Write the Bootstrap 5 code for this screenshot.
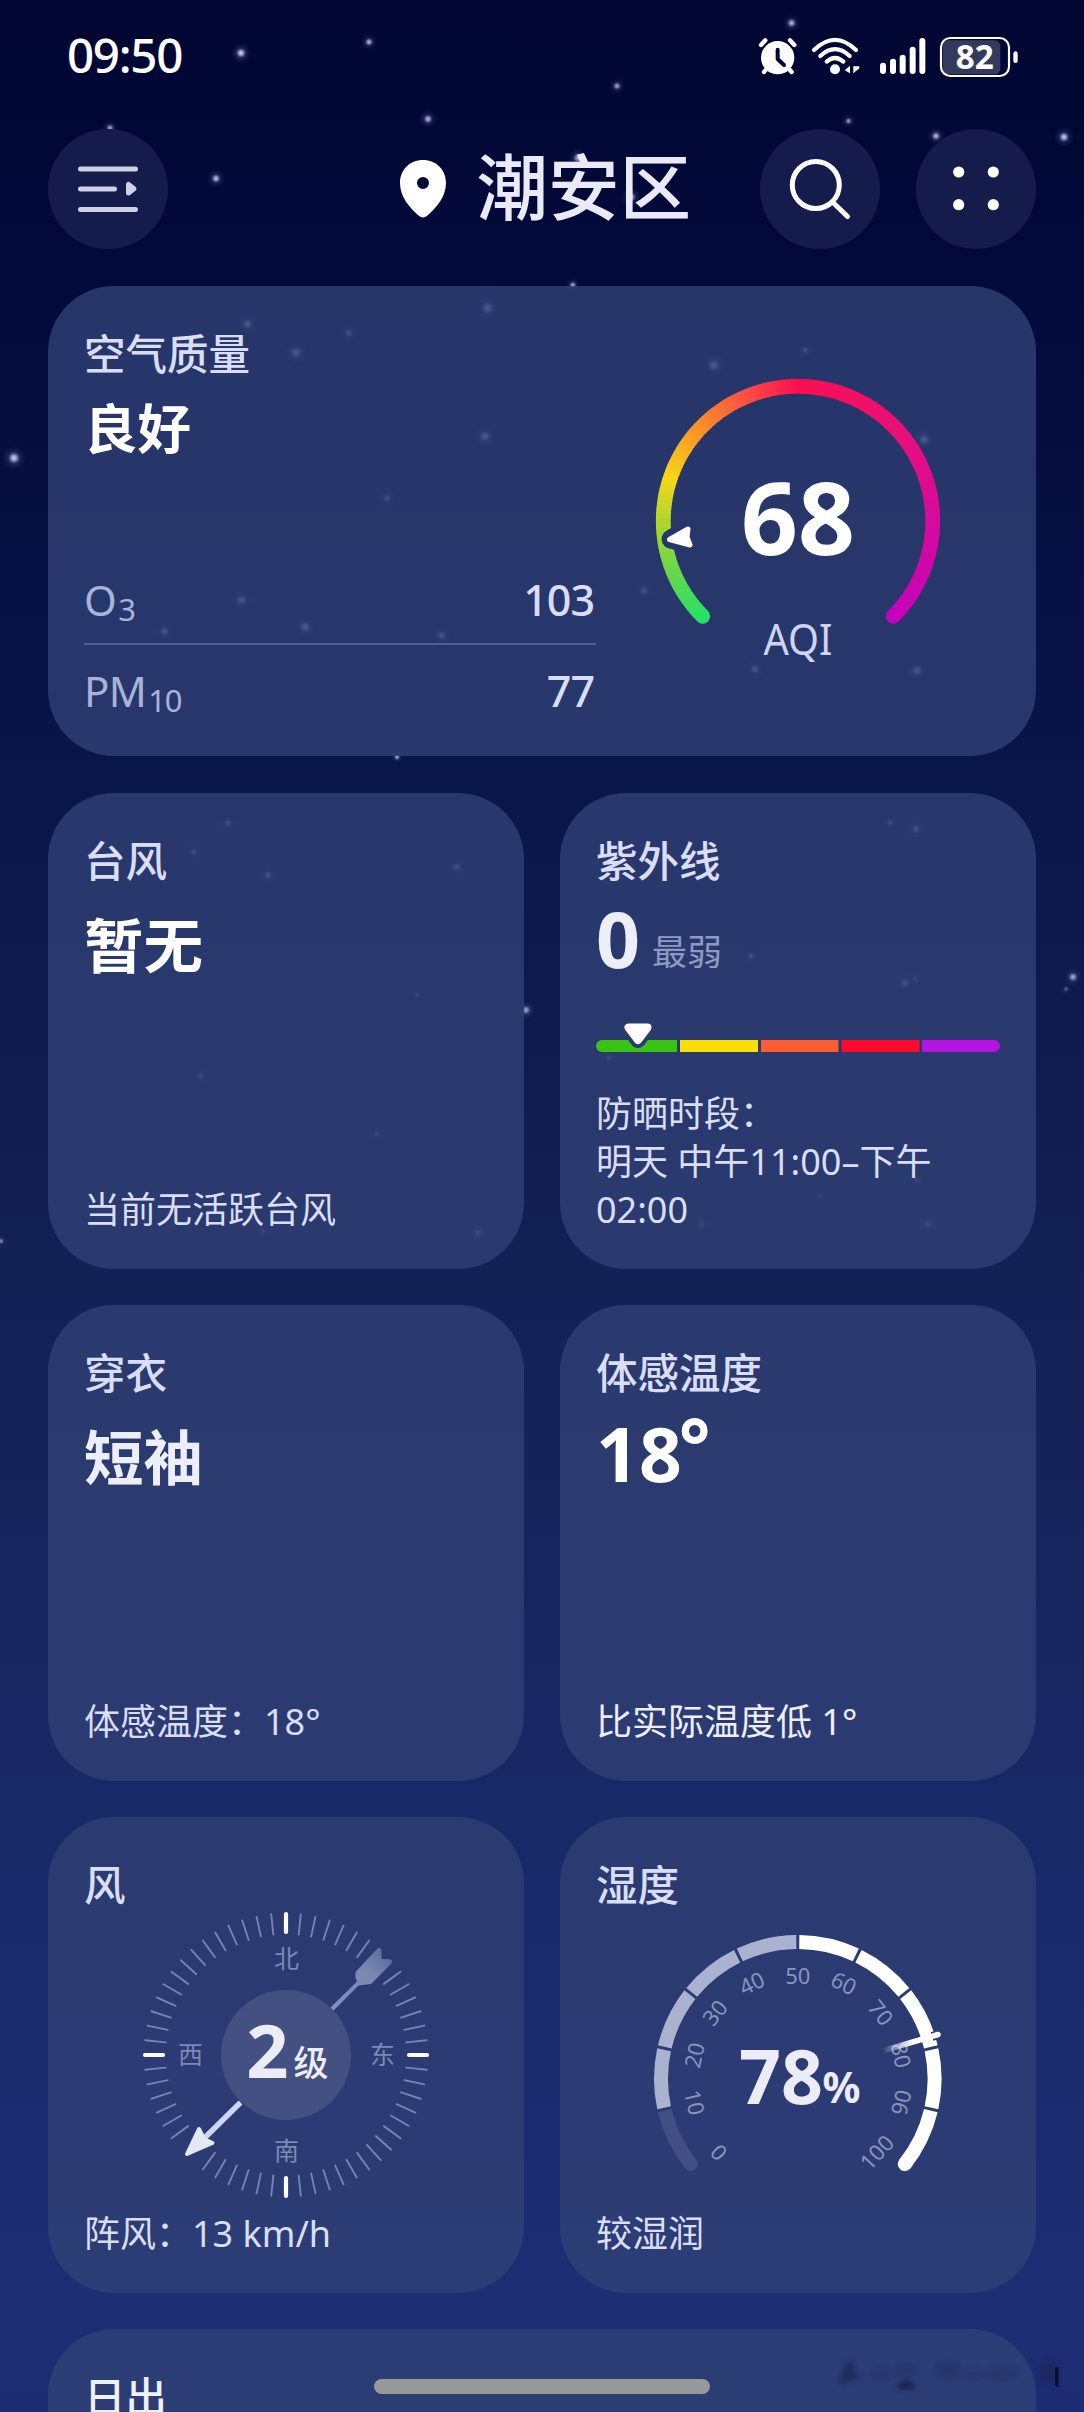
<!DOCTYPE html>
<html lang="zh-CN">
<head>
<meta charset="utf-8">
<meta name="viewport" content="width=device-width, initial-scale=1">
<title>潮安区 天气</title>
<link href="https://cdn.jsdelivr.net/npm/bootstrap@5.3.0/dist/css/bootstrap.min.css" rel="stylesheet">
<style>
body{margin:0;background:#010630;font-family:"Noto Sans","Noto Sans CJK SC",sans-serif;color:#d9def6}
.screen{width:1084px;height:2412px;background:linear-gradient(180deg,#010632 0,#020a3a 280px,#0a1548 780px,#142155 1290px,#192866 1800px,#1f2d75 2300px,#1e2c74 100%)}
.sky{left:0;top:0;z-index:0}
.statusbar{height:113px;padding:0 63.5px 0 67px}
.clock{font-size:47.5px;font-weight:500;line-height:110px;height:113px;letter-spacing:-1.3px;color:#fff}
.topbar{height:173px;padding:16px 48px 37px}
.round-btn{width:120px;height:120px;background:#151c4c;border:0;padding:0}
.place{font-size:71.5px;line-height:110px;color:#e9eaf6;margin-right:69px;font-weight:500;padding-bottom:5px}
.pin{margin-right:25px}
.tiles{padding:0 48px}
.tile{--bs-card-bg:rgba(48,64,116,.82);--bs-card-color:#d9def6;--bs-card-border-width:0;--bs-card-border-radius:66px;height:476px;padding:44px 36px 35px}
.tile-wide{height:470px;padding-bottom:19px}
.pair{gap:36px}
.pair>.tile{width:476px}
.cap{font-size:41.5px;line-height:48px;font-weight:500}
.big{font-size:59.5px;line-height:72px;height:72px;flex-shrink:0;margin-top:24px;font-weight:700;color:#fff}
.big-air{font-size:53.5px;margin-top:15px}
.big-uv{font-size:77px;margin-top:18px;color:#eceef8}
.big-uv span{font-size:35px;line-height:0;font-weight:400;color:#8f9ac4;margin-left:12px;vertical-align:3px}
.big-feel{font-size:75px;margin-top:20px}
.big-feel span{line-height:0;vertical-align:9px;margin-left:-3px}
.soft{color:#eceef9}
.foot{font-size:36px;line-height:48px}
.left-col{width:512px}
.gas{height:92px;font-size:42px;line-height:92px;color:#a9b3da;letter-spacing:-.6px}
.gas span{font-size:43px;font-weight:500;color:#d9def6;letter-spacing:-1px;padding-right:2px}
.gas sub{font-size:31px;bottom:-.16em;line-height:0;margin-left:2px;letter-spacing:-1.4px}
.gas-line{height:90px;line-height:90px;border-bottom:2px solid #515e8f}
.uvbar{margin-top:40px;flex-shrink:0}
.home-bar{left:374px;top:2379px;width:336px;height:15px;border-radius:8px;background:#999}
.shade{left:820px;top:2345px}
svg{display:block}
svg text{font-family:"Noto Sans","Noto Sans CJK SC",sans-serif}
</style>
<script src="https://cdn.jsdelivr.net/npm/bootstrap@5.3.0/dist/js/bootstrap.bundle.min.js"></script>
</head>
<body>
<div class="screen position-relative overflow-hidden">
  <svg class="sky position-absolute" width="1084" height="2412" viewBox="0 0 1084 2412" id="sky">
    <defs><radialGradient id="glow"><stop offset="0" stop-color="#dfe3fb"/><stop offset=".25" stop-color="#b4bce4" stop-opacity=".75"/><stop offset=".5" stop-color="#6f7ab8" stop-opacity=".22"/><stop offset="1" stop-color="#4a58a0" stop-opacity="0"/></radialGradient></defs>
  </svg>

  <div class="position-relative">
    <div class="statusbar d-flex align-items-center justify-content-between">
      <div class="clock">09:50</div>
      <svg width="264" height="65" viewBox="48 -3 792 195" fill="#fff" stroke-linecap="round" stroke-linejoin="round">
        <circle cx="110" cy="98" r="50"/>
        <path d="M60 60 73 46M160 60 147 46" stroke="#fff" stroke-width="13"/>
        <path d="M78 130 69 141M142 130 152 141" stroke="#fff" stroke-width="13"/>
        <path d="M110 74V102L129 120" fill="none" stroke="#020735" stroke-width="12"/>
        <path d="M219 75Q282 14 345 75M238 93Q282 52 326 93M257 110Q282 88 307 110" fill="none" stroke="#fff" stroke-width="12.5"/>
        <circle cx="282" cy="133" r="15"/>
        <path d="M311 136 327 122V145M332 122V145M337 122V145L355 130V124H337" />
        <path d="M426 122V138M456 110V138M485 98V138M515 74V138M544 48V138" stroke="#fff" stroke-width="18"/>
        <rect x="606" y="46" width="172" height="102" rx="16" fill="#343a5e"/>
        <rect x="600" y="39" width="204" height="114" rx="28" fill="none" stroke="#fff" stroke-width="6.5"/>
        <rect x="817" y="79" width="13" height="35" rx="6.5"/>
        <text x="701" y="133" font-size="101" font-weight="700" text-anchor="middle" textLength="114" lengthAdjust="spacingAndGlyphs">82</text>
      </svg>
    </div>

    <header class="topbar d-flex align-items-center">
      <button class="round-btn rounded-circle d-flex align-items-center justify-content-center" aria-label="列表">
        <svg width="64" height="50" viewBox="76 164 64 50" fill="none" stroke="#ced1e9" stroke-width="5" stroke-linecap="round"><path d="M80.500 169H135.500M80.500 189H114.500M80.500 209.500H135.500"/><path d="M128.500 184.500v8.500l5.500-4.300z" fill="#ced1e9" stroke-linejoin="round"/></svg>
      </button>
      <svg class="pin ms-auto" width="48" height="60" viewBox="399 160 48 60"><path fill="#fff" fill-rule="evenodd" d="M423 161c13.500 0 23 10 23 23 0 14-10 25-18.500 32.500q-4.500 4-9 0C410 209 400 198 400 184c0-13 9.500-23 23-23zm0 17a6 6 0 1 0 0 12 6 6 0 0 0 0-12z"/></svg>
      <div class="place ps-1">潮安区</div>
      <button class="round-btn rounded-circle d-flex align-items-center justify-content-center" aria-label="搜索">
        <svg width="120" height="120" viewBox="760 129 120 120" fill="none" stroke="#fff" stroke-width="5" stroke-linecap="round"><circle cx="815.800" cy="185" r="23.500"/><path d="M833 202.500 847.500 216.500"/></svg>
      </button>
      <button class="round-btn rounded-circle d-flex align-items-center justify-content-center" style="margin-left:36px" aria-label="更多">
        <svg width="120" height="120" viewBox="916 129 120 120" fill="#fff"><circle cx="958.700" cy="172" r="5.600"/><circle cx="993.300" cy="172" r="5.600"/><circle cx="958.700" cy="204.700" r="5.600"/><circle cx="993.300" cy="204.700" r="5.600"/></svg>
      </button>
    </header>

    <main class="tiles d-flex flex-column" style="gap:36px">
      <section class="card tile tile-wide flex-row" style="margin-bottom:1px">
        <div class="left-col d-flex flex-column flex-shrink-0">
          <div class="cap">空气质量</div>
          <div class="big big-air">良好</div>
          <div class="gas gas-line d-flex justify-content-between mt-auto"><div>O<sub>3</sub></div><span>103</span></div>
          <div class="gas d-flex justify-content-between"><div>PM<sub>10</sub></div><span>77</span></div>
        </div>
        <svg width="404" height="407" viewBox="596 330 404 407">
          <g id="aqi"></g>
          <path d="M671 539 687 530 685.500 537 689 544z" fill="#28376b" stroke="#28376b" stroke-width="19" stroke-linejoin="round"/>
          <path d="M669.500 539.500 688 529 687 537 690 545z" fill="#fff" stroke="#fff" stroke-width="5" stroke-linejoin="round"/>
          <text x="798" y="555" font-size="100" font-weight="700" fill="#fff" text-anchor="middle" textLength="114" lengthAdjust="spacingAndGlyphs">68</text>
          <text x="798" y="655" font-size="43" fill="#cdd5f3" text-anchor="middle" textLength="69" lengthAdjust="spacingAndGlyphs">AQI</text>
        </svg>
      </section>

      <div class="pair d-flex">
        <section class="card tile">
          <div class="cap">台风</div>
          <div class="big">暂无</div>
          <div class="foot mt-auto">当前无活跃台风</div>
        </section>
        <section class="card tile">
          <div class="cap">紫外线</div>
          <div class="big big-uv">0<span>最弱</span></div>
          <svg class="uvbar" width="404" height="45" viewBox="596 1015 404 45">
            <path fill="#39c313" d="M602 1040H677V1052H602a6 6 0 0 1 0-12z"/>
            <path fill="#fbdd0a" d="M680 1040h78v12h-78z"/><path fill="#fb5e2e" d="M761 1040h77.500v12H761z"/><path fill="#fb0a2a" d="M841.500 1040H919.500v12H841.500z"/>
            <path fill="#b115df" d="M922 1040H994a6 6 0 0 1 0 12H922z"/>
            <path d="M629 1028H647L638 1040z" fill="#2b396d" stroke="#2b396d" stroke-width="16" stroke-linejoin="round"/>
            <path d="M628.500 1027.500H647.500L638 1040z" fill="#fff" stroke="#fff" stroke-width="8" stroke-linejoin="round"/>
          </svg>
          <div class="foot mt-auto">防晒时段：<br>明天 中午11:00–下午<br>02:00</div>
        </section>
      </div>

      <div class="pair d-flex">
        <section class="card tile">
          <div class="cap">穿衣</div>
          <div class="big soft">短袖</div>
          <div class="foot mt-auto">体感温度：18°</div>
        </section>
        <section class="card tile">
          <div class="cap">体感温度</div>
          <div class="big big-feel">18<span>°</span></div>
          <div class="foot mt-auto soft">比实际温度低 1°</div>
        </section>
      </div>

      <div class="pair d-flex">
        <section class="card tile">
          <div class="cap">风</div>
          <svg width="404" height="301" viewBox="84 1909 404 301">
            <defs><linearGradient id="tail" gradientUnits="userSpaceOnUse" x1="335" y1="2005" x2="392" y2="1950"><stop offset="0" stop-color="#8490ba"/><stop offset=".6" stop-color="#7b87b3"/><stop offset="1" stop-color="#586595"/></linearGradient></defs>
            <g id="ticks"></g>
            <circle cx="286" cy="2055" r="65" fill="#435081"/>
            <path fill="url(#tail)" d="M330.500 2007.500 357 1981.500 355.500 1978V1972L376 1950Q381 1945 381.500 1951V1959H389Q394 1960 391 1964L371 1984 358.500 1985.500 333.500 2010.500z"/>
            <path d="M240.500 2102.500 204 2138.500" stroke="#cdd6ef" stroke-width="5.500"/>
            <path d="M187 2154 199 2129 204 2139 212.500 2143z" fill="#e4e8f4" stroke="#e4e8f4" stroke-width="4" stroke-linejoin="round"/>
            <text x="267.500" y="2077.500" font-size="74" font-weight="700" fill="#ebecf6" text-anchor="middle">2</text>
            <text x="311" y="2076" font-size="35" font-weight="500" fill="#ebecf6" text-anchor="middle">级</text>
            <g font-size="25" fill="#7c88b6" text-anchor="middle"><text x="286.500" y="1967.500">北</text><text x="382.500" y="2064">东</text><text x="286.500" y="2160">南</text><text x="190.500" y="2064">西</text></g>
          </svg>
          <div class="foot">阵风：13 km/h</div>
        </section>
        <section class="card tile">
          <div class="cap">湿度</div>
          <svg width="404" height="301" viewBox="596 1909 404 301">
            <defs><linearGradient id="needle" gradientUnits="userSpaceOnUse" x1="883" y1="2051" x2="912" y2="2042"><stop offset="0" stop-color="#fff" stop-opacity="0"/><stop offset="1" stop-color="#fff"/></linearGradient></defs>
            <g id="hum"></g>
            <path d="M932 2036.500 938.500 2034.500" stroke="#2c3b74" stroke-width="9"/>
            <path d="M884 2050.500 938 2034.500" stroke="url(#needle)" stroke-width="5.500" stroke-linecap="round"/>
            <text x="781" y="2103.500" font-size="75" font-weight="700" fill="#ebecf6" text-anchor="middle" textLength="84" lengthAdjust="spacingAndGlyphs">78</text>
            <text x="841.500" y="2103" font-size="43" font-weight="700" fill="#ebecf6" text-anchor="middle" textLength="38" lengthAdjust="spacingAndGlyphs">%</text>
          </svg>
          <div class="foot">较湿润</div>
        </section>
      </div>

      <section class="card tile">
        <div class="cap" style="color:#eef0fa">日出</div>
      </section>
    </main>
  </div>

  <svg class="shade position-absolute" width="264" height="60" viewBox="820 2345 264 60">
    <defs><filter id="soften" x="-20%" y="-50%" width="140%" height="200%"><feGaussianBlur stdDeviation="2.500"/></filter></defs>
    <g filter="url(#soften)" fill="#1c2554" opacity=".75"><path d="M840 2382 846 2362 853 2361 855 2374 862 2376 842 2384z"/><path d="M899 2385Q908 2378 915 2388H899z" fill="#080f38"/><ellipse cx="905" cy="2371" rx="11" ry="6" opacity=".3"/><ellipse cx="948" cy="2370" rx="12" ry="8" opacity=".4"/><ellipse cx="1003" cy="2373" rx="15" ry="6" opacity=".35"/><ellipse cx="974" cy="2374" rx="10" ry="5" opacity=".25"/><ellipse cx="881" cy="2374" rx="9" ry="7" opacity=".25"/><path d="M1038 2368 1050 2360 1058 2364V2387L1040 2383z" opacity=".7"/></g>
    <path d="M1055 2367 1058.500 2367V2388L1055 2385z" fill="#070d36"/>
  </svg>
  <div class="home-bar position-absolute"></div>
</div>

<script>
const NS='http://www.w3.org/2000/svg';
function add(id,tag,attrs,text){const e=document.createElementNS(NS,tag);for(const k in attrs)e.setAttribute(k,attrs[k]);if(text!==undefined)e.textContent=text;document.getElementById(id).appendChild(e);}
// Clockwise angle from the top, in degrees
function pt(cx,cy,r,a){const t=a*Math.PI/180;return [(cx+r*Math.sin(t)).toFixed(2),(cy-r*Math.cos(t)).toFixed(2)];}
function arc(cx,cy,r,a,b){return 'M'+pt(cx,cy,r,a)+'A'+r+' '+r+' 0 0 1 '+pt(cx,cy,r,b);}

// Stars: x, y, radius, opacity
[[241,53,10,1],[369,42,8,.85],[428,119,9,.85],[110,128,8,.75],[216,178.5,9,.9],[791.6,23,9,.85],[617,86,8,.75],[848.5,121,7,.7],[936,136,9,.85],[1064,137,10,.95],[578,158,10,.8],[631,197,10,.8],[572.800,285,7,.8],[397,757,6,.8],[14,458,12,.95],[1073,977,9,.8],[1066,989,6,.35],[526,1010,9,.75],[1,1241,6,.6],
[247.5,324,10,1],[348.6,333,9,.8],[296,352.6,12,1],[487.6,308,12,1],[485,436.6,11,1],[387,498,9,.7],[241.5,600,11,.9],[305,627,11,1],[164.6,631.5,9,.9],[441.7,635.5,10,.8],[714,365,12,1],[805,350,8,.7],[924,439.5,11,1],[644,591,9,.8],[755,669,10,.8],[917,670.5,11,.9],
[890,823,7,.6],[916,829,9,.8],[751,956,8,.7],[905,983,10,.7],[915,979,7,.5],[609,1058,8,.4],[917,1180,8,.4],[820,1196,7,.4],[701,1224,9,.4],[928,1224,9,.5],[228,823,8,.7],[194,852,8,.7],[268,875,9,.8],[457,867,9,.7],[417,995,7,.4],[201,1076,8,.5],[377,1134,8,.4],[263,1231,8,.3],[478,1233,9,.6]]
.forEach(([x,y,r,o])=>add('sky','circle',{cx:x,cy:y,r:r,fill:'url(#glow)',opacity:o}));

// AQI ring
const stops=[[0,39,225,100],[.08,98,216,79],[.167,176,214,44],[.235,249,214,24],[.327,252,143,40],[.415,253,80,66],[.5,251,15,80],[.68,232,16,122],[.83,214,10,156],[1,196,3,189]];
function mix(t){for(let i=1;i<stops.length;i++){const p=stops[i-1],q=stops[i];if(t<=q[0]){const k=(t-p[0])/(q[0]-p[0]);return 'rgb('+[1,2,3].map(j=>Math.round(p[j]+(q[j]-p[j])*k)).join(',')+')';}}return 'rgb(196,3,189)';}
[[-135,0],[135,1]].forEach(([a,t])=>{const p=pt(798,521,134.7,a);add('aqi','circle',{cx:p[0],cy:p[1],r:7.4,fill:mix(t)});});
for(let i=0;i<135;i++)add('aqi','path',{d:arc(798,521,134.7,-135+i*2,Math.min(135,-135+i*2+2.5)),stroke:mix((i+.5)/135),'stroke-width':14.8,fill:'none'});

// Compass ticks every 6 degrees, leaving room for the arrow ends
for(let a=0;a<360;a+=6){if([42,48,222,228].includes(a))continue;const m=a%90===0;
 const p=pt(286,2055,m?123:121,a),q=pt(286,2055,m?141:141.5,a);
 add('ticks','path',{d:'M'+p+'L'+q,stroke:m?'#fff':'#7783b2','stroke-width':m?4.2:1.9,'stroke-linecap':'round'});}

// Humidity scale
const step=360/14,cx=797.8,cy=2078.8;
for(let i=0;i<10;i++){const a=(i-5)*step+(i?0.62:0),b=(i-4)*step-(i<9?0.62:0),c=i===0?'#434f82':i<5?'#abb2d0':'#fff';
 if(i===0)add('hum','path',{d:arc(cx,cy,136.8,a,a+1),stroke:c,'stroke-width':14,'stroke-linecap':'round',fill:'none'});
 if(i===9)add('hum','path',{d:arc(cx,cy,136.8,b-1,b),stroke:c,'stroke-width':14,'stroke-linecap':'round',fill:'none'});
 add('hum','path',{d:arc(cx,cy,136.8,a,b),stroke:c,'stroke-width':14,fill:'none'});}
for(let i=0;i<=10;i++){const end=i%10===0,a=end?(i?133:-133):(i-5)*step,p=pt(cx,cy,i===5?102.5:end?108:106,a),rot=a>90?a-180:a<-90?a+180:a;
 add('hum','text',{x:p[0],y:p[1],dy:8,transform:`rotate(${rot} ${p[0]} ${p[1]})`,'font-size':22,fill:'#8993be','text-anchor':'middle'},i*10);}
</script>
</body>
</html>
